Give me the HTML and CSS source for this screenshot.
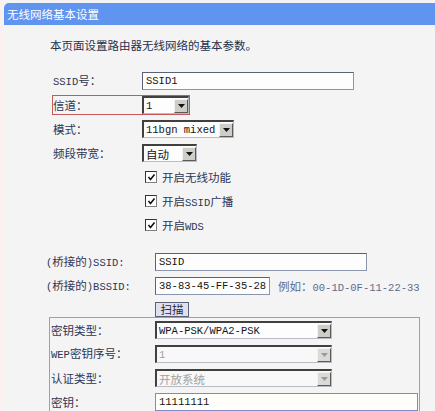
FILE: index.html
```html
<!DOCTYPE html>
<html lang="zh-CN">
<head>
<meta charset="utf-8">
<title>无线网络基本设置</title>
<link rel="stylesheet" href="styles.css">
</head>
<body>
<div class="page">
  <div class="header">无线网络基本设置</div>
  <p class="desc">本页面设置路由器无线网络的基本参数。</p>

  <div class="g1">
    <div class="row">
      <span class="label"><span class="en">SSID</span>号：</span>
      <div class="input w-ssid">SSID1</div>
    </div>
    <div class="row">
      <div class="mark">
        <span class="label">信道：</span>
        <div class="select w-ch"><span class="val">1</span><span class="arrow"><svg width="7" height="4" viewBox="0 0 7 4"><polygon points="0,0 7,0 3.5,4" fill="#111"/></svg></span></div>
      </div>
    </div>
    <div class="row">
      <span class="label">模式：</span>
      <div class="select w-mode"><span class="val">11bgn mixed</span><span class="arrow"><svg width="7" height="4" viewBox="0 0 7 4"><polygon points="0,0 7,0 3.5,4" fill="#111"/></svg></span></div>
    </div>
    <div class="row">
      <span class="label">频段带宽：</span>
      <div class="select w-bw"><span class="val cjk">自动</span><span class="arrow"><svg width="7" height="4" viewBox="0 0 7 4"><polygon points="0,0 7,0 3.5,4" fill="#111"/></svg></span></div>
    </div>
    <div class="row checkrow">
      <span class="cb"><svg width="9" height="9" viewBox="0 0 9 9"><polyline points="1.5,4 3.5,6.5 7.5,1.5" fill="none" stroke="#111" stroke-width="1.6"/></svg></span>
      <span class="cbtext">开启无线功能</span>
    </div>
    <div class="row checkrow">
      <span class="cb"><svg width="9" height="9" viewBox="0 0 9 9"><polyline points="1.5,4 3.5,6.5 7.5,1.5" fill="none" stroke="#111" stroke-width="1.6"/></svg></span>
      <span class="cbtext">开启<span class="en">SSID</span>广播</span>
    </div>
    <div class="row checkrow">
      <span class="cb"><svg width="9" height="9" viewBox="0 0 9 9"><polyline points="1.5,4 3.5,6.5 7.5,1.5" fill="none" stroke="#111" stroke-width="1.6"/></svg></span>
      <span class="cbtext">开启<span class="en">WDS</span></span>
    </div>
  </div>

  <div class="g2">
    <div class="row">
      <span class="label"><span class="en">(</span>桥接的<span class="en">)SSID:</span></span>
      <div class="input w-bssid-name">SSID</div>
    </div>
    <div class="row">
      <span class="label"><span class="en">(</span>桥接的<span class="en">)BSSID:</span></span>
      <div class="input w-mac">38-83-45-FF-35-28</div>
      <span class="example">例如：<span class="en">00-1D-0F-11-22-33</span></span>
    </div>
    <div class="scanrow">
      <button class="scan">扫描</button>
    </div>
  </div>

  <div class="keybox">
    <div class="row">
      <span class="label">密钥类型：</span>
      <div class="select w-key"><span class="val">WPA-PSK/WPA2-PSK</span><span class="arrow"><svg width="7" height="4" viewBox="0 0 7 4"><polygon points="0,0 7,0 3.5,4" fill="#111"/></svg></span></div>
    </div>
    <div class="row">
      <span class="label"><span class="en">WEP</span>密钥序号：</span>
      <div class="select w-key disabled"><span class="val">1</span><span class="arrow"><svg width="7" height="4" viewBox="0 0 7 4"><polygon points="0,0 7,0 3.5,4" fill="#9a9a9a"/></svg></span></div>
    </div>
    <div class="row">
      <span class="label">认证类型：</span>
      <div class="select w-key disabled"><span class="val cjk">开放系统</span><span class="arrow"><svg width="7" height="4" viewBox="0 0 7 4"><polygon points="0,0 7,0 3.5,4" fill="#9a9a9a"/></svg></span></div>
    </div>
    <div class="row">
      <span class="label">密钥：</span>
      <div class="input w-pass">11111111</div>
    </div>
  </div>
</div>
</body>
</html>
```

FILE: styles.css
```css
html, body {
  margin: 0;
  padding: 0;
  overflow: hidden;
  height: 411px;
}

body {
  background: #fbf1f1;
  font-family: "Noto Sans CJK SC", sans-serif;
  font-size: 11.5px;
  color: #2c3656;
}

.page {
  margin-left: 4px;
  height: 411px;
  padding-top: 3px;
  box-sizing: border-box;
  background: #f4f4f4;
  overflow: hidden;
}

.header {
  height: 22px;
  line-height: 22px;
  padding-left: 3px;
  background: #5f94ef;
  color: #fff;
  border-top-left-radius: 5px;
}

.desc {
  margin: 13px 0 17px 46px;
  line-height: 14px;
  color: #24304e;
}

.en {
  font-family: "Liberation Mono", monospace;
  font-size: 10.5px;
}

.row {
  display: flex;
  align-items: center;
  height: 24px;
}

.label {
  flex: none;
  white-space: nowrap;
  line-height: 14px;
}

/* group 1 */
.g1 .row {
  padding-left: 49px;
}

.g1 .label {
  width: 89px;
}

.mark {
  display: flex;
  align-items: center;
  margin-left: -1px;
  border: 1px solid #c65a5a;
}

.g1 .checkrow {
  padding-left: 141px;
}

.cb {
  flex: none;
  width: 12px;
  height: 12px;
  box-sizing: border-box;
  border: 1px solid #808080;
  border-top-color: #333;
  border-left-color: #333;
  background: #fff;
  display: flex;
  align-items: center;
  justify-content: center;
}

.cbtext {
  margin-left: 5px;
  color: #2c3656;
}

/* group 2 */
.g2 {
  margin-top: 13px;
}

.g2 .row {
  padding-left: 42px;
}

.g2 .label {
  width: 109px;
}

.example {
  margin-left: 8px;
  color: #5d6b8e;
  white-space: nowrap;
}

.scanrow {
  height: 19px;
  padding-left: 151px;
  display: flex;
  align-items: flex-end;
}

.scan {
  height: 15px;
  width: 34px;
  padding: 0;
  margin: 0;
  font-family: "Noto Sans CJK SC", sans-serif;
  font-size: 11.5px;
  line-height: 13px;
  color: #1e2a48;
  background: #dfe1ef;
  border: 1px solid #5a6078;
  border-radius: 0;
}

/* key box */
.keybox {
  margin-left: 45px;
  width: 371px;
  box-sizing: border-box;
  border: 1px solid #c49090;
  border-bottom: none;
}

.keybox .row {
  padding-left: 1px;
}

.keybox .label {
  width: 104px;
}

/* controls */
.input {
  flex: none;
  height: 18px;
  box-sizing: border-box;
  padding-left: 3px;
  border: 1px solid #8a96ae;
  border-top-color: #5a6276;
  border-left-color: #5a6276;
  background: #fdfdfd;
  font-family: "Liberation Mono", monospace;
  font-size: 10.5px;
  line-height: 16px;
  color: #151515;
  white-space: nowrap;
}

.select {
  flex: none;
  height: 18px;
  box-sizing: border-box;
  display: flex;
  align-items: center;
  justify-content: space-between;
  border: 1px solid #b8bcc4;
  border-top: 2px solid #404040;
  border-left: 2px solid #404040;
  background: #fdfdfd;
  font-family: "Liberation Mono", monospace;
  font-size: 10.5px;
  color: #151515;
}

.select .val {
  padding-left: 2px;
  white-space: nowrap;
  line-height: 14px;
}

.select .val.cjk {
  font-family: "Noto Sans CJK SC", sans-serif;
  font-size: 11.5px;
}

.arrow {
  flex: none;
  width: 14px;
  height: 14px;
  box-sizing: border-box;
  display: flex;
  align-items: center;
  justify-content: center;
  background: #cfcdc8;
  border: 1px solid #5a5a5a;
  border-top-color: #f2f2f2;
  border-left-color: #f2f2f2;
}

.select.disabled {
  color: #a0a0a0;
  background: #f8f8f8;
}

.select.disabled .arrow {
  background: #dcdad6;
}

.w-ssid { width: 212px; }
.w-ch { width: 47px; }
.w-mode { width: 92px; }
.w-bw { width: 55px; }
.w-bssid-name { width: 212px; }
.w-mac { width: 115px; }
.w-key { width: 177px; }

.w-pass {
  width: 263px;
  border-color: #8587c2;
  background: #fffef8;
}
```
